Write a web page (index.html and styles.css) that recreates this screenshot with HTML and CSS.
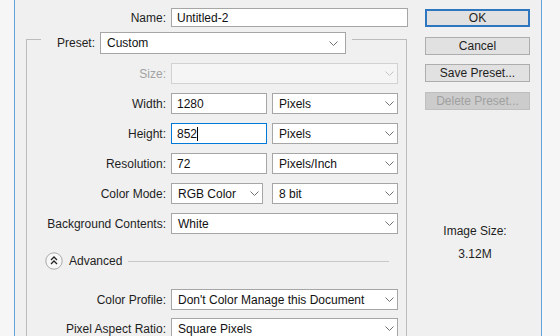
FILE: index.html
```html
<!DOCTYPE html>
<html lang="en">
<head>
  <meta charset="UTF-8" />
  <meta name="viewport" content="width=device-width, initial-scale=1.0"/>
  <title>New</title>
  <link rel="stylesheet" href="styles.css">
</head>
<body>

  <div class="screen">
    <div class="dialog">

      <div class="form">
        <div class="name-row">
          <span class="label">Name:</span>
          <div class="field">Untitled-2</div>
        </div>

        <fieldset class="group">
          <legend class="preset">
            <span class="label">Preset:</span>
            <div class="select preset-select">
              <span>Custom</span>
              <svg class="chev" width="9" height="5" viewBox="0 0 9 5"><path d="M0.5 0.5 L4.5 4.5 L8.5 0.5"/></svg>
            </div>
          </legend>

          <div class="rows">
            <span class="label disabled">Size:</span>
            <div class="select disabled">
              <span></span>
              <svg class="chev" width="9" height="5" viewBox="0 0 9 5"><path d="M0.5 0.5 L4.5 4.5 L8.5 0.5"/></svg>
            </div>

            <span class="label">Width:</span>
            <div class="pair">
              <div class="field num">1280</div>
              <div class="select">
                <span>Pixels</span>
                <svg class="chev" width="9" height="5" viewBox="0 0 9 5"><path d="M0.5 0.5 L4.5 4.5 L8.5 0.5"/></svg>
              </div>
            </div>

            <span class="label">Height:</span>
            <div class="pair">
              <div class="field num focus">852<span class="caret"></span></div>
              <div class="select">
                <span>Pixels</span>
                <svg class="chev" width="9" height="5" viewBox="0 0 9 5"><path d="M0.5 0.5 L4.5 4.5 L8.5 0.5"/></svg>
              </div>
            </div>

            <span class="label">Resolution:</span>
            <div class="pair">
              <div class="field num">72</div>
              <div class="select">
                <span>Pixels/Inch</span>
                <svg class="chev" width="9" height="5" viewBox="0 0 9 5"><path d="M0.5 0.5 L4.5 4.5 L8.5 0.5"/></svg>
              </div>
            </div>

            <span class="label">Color Mode:</span>
            <div class="pair mode">
              <div class="select mode-select">
                <span>RGB Color</span>
                <svg class="chev" width="9" height="5" viewBox="0 0 9 5"><path d="M0.5 0.5 L4.5 4.5 L8.5 0.5"/></svg>
              </div>
              <div class="select">
                <span>8 bit</span>
                <svg class="chev" width="9" height="5" viewBox="0 0 9 5"><path d="M0.5 0.5 L4.5 4.5 L8.5 0.5"/></svg>
              </div>
            </div>

            <span class="label">Background Contents:</span>
            <div class="select">
              <span>White</span>
              <svg class="chev" width="9" height="5" viewBox="0 0 9 5"><path d="M0.5 0.5 L4.5 4.5 L8.5 0.5"/></svg>
            </div>
          </div>

          <div class="advanced">
            <svg class="toggle" width="18" height="18" viewBox="0 0 18 18">
              <circle cx="9" cy="9" r="8.2" fill="#f7f7f7" stroke="#a9a9a9"/>
              <path d="M6 8 L9 5 L12 8 M6 12 L9 9 L12 12" fill="none" stroke="#222" stroke-width="1.3"/>
            </svg>
            <span>Advanced</span>
            <span class="rule"></span>
          </div>

          <div class="rows rows-advanced">
            <span class="label">Color Profile:</span>
            <div class="select">
              <span>Don't Color Manage this Document</span>
              <svg class="chev" width="9" height="5" viewBox="0 0 9 5"><path d="M0.5 0.5 L4.5 4.5 L8.5 0.5"/></svg>
            </div>

            <span class="label">Pixel Aspect Ratio:</span>
            <div class="select">
              <span>Square Pixels</span>
              <svg class="chev" width="9" height="5" viewBox="0 0 9 5"><path d="M0.5 0.5 L4.5 4.5 L8.5 0.5"/></svg>
            </div>
          </div>
        </fieldset>
      </div>

      <div class="side">
        <button class="btn default">OK</button>
        <button class="btn">Cancel</button>
        <button class="btn">Save Preset...</button>
        <button class="btn" disabled>Delete Preset...</button>

        <div class="info">
          <div>Image Size:</div>
          <div class="size">3.12M</div>
        </div>
      </div>

    </div>
  </div>

</body>
</html>
```

FILE: styles.css
```css
:root {
  --face: #f0f0f0;
  --text: #1e1e1e;
  --edge: #a6a6a6;
  --blue: #0078d7;
}

* {
  box-sizing: border-box;
}

body {
  margin: 0;
  background: #f6f6f6;
  font-family: 'Liberation Sans', Arial, sans-serif;
  font-size: 12px;
  color: var(--text);
}

.screen {
  height: 336px;
  overflow: hidden;
  display: flex;
}

.dialog {
  margin-left: 14px;
  width: 528px;
  height: 336px;
  display: flex;
  background: var(--face);
  border-left: 1px solid #62a3da;
  border-right: 1px solid #62a3da;
}

.form {
  width: 395px;
}

.label {
  text-align: right;
  white-space: nowrap;
}

.label.disabled {
  color: #a2a2a2;
}

/* name */
.name-row {
  display: grid;
  grid-template-columns: 151px 237px;
  column-gap: 5px;
  align-items: center;
  padding-top: 8px;
}

.field,
.select {
  height: 21px;
  background: #fff;
  border: 1px solid var(--edge);
  display: flex;
  align-items: center;
  white-space: nowrap;
  color: #111;
}

.field {
  padding-left: 5px;
}

.name-row .field {
  height: 19px;
}

.field.focus {
  border-color: var(--blue);
}

.caret {
  width: 1px;
  height: 14px;
  background: #000;
}

.select {
  justify-content: space-between;
  padding: 0 3px 0 6px;
}

.select.disabled {
  background: #f5f5f5;
  border-color: #d2d2d2;
}

.chev {
  flex: none;
  fill: none;
  stroke: #707070;
}

.select.disabled .chev {
  stroke: #c4c4c4;
}

/* preset group */
.group {
  margin: -3px 0 0 11px;
  width: 381px;
  min-width: 0;
  padding: 9px 0 20px;
  border: 1px solid #bcbcbc;
}

.preset {
  display: flex;
  align-items: center;
  gap: 5px;
  margin-left: 14px;
  padding: 8px 6px 0 2px;
}

.preset .label {
  width: 52px;
}

.preset-select {
  width: 246px;
  height: 22px;
  padding-right: 7px;
}

.rows {
  display: grid;
  grid-template-columns: 139px 227px;
  grid-auto-rows: 21px;
  column-gap: 5px;
  row-gap: 9px;
  align-items: center;
}

.pair {
  display: flex;
  gap: 5px;
  height: 21px;
}

.pair .field {
  width: 96px;
  flex: none;
}

.pair .select {
  flex: 1;
}

.pair.mode {
  gap: 9px;
}

.pair .mode-select {
  flex: none;
  width: 92px;
}

/* advanced */
.advanced {
  display: flex;
  align-items: center;
  gap: 6px;
  height: 18px;
  margin: 18px 17px 0 0;
  padding-left: 18px;
}

.rule {
  flex: 1;
  border-top: 1px solid #c8c8c8;
}

.rows-advanced {
  margin-top: 19px;
  row-gap: 8px;
}

/* buttons */
.side {
  width: 105px;
  margin-left: 15px;
  padding-top: 9px;
  display: flex;
  flex-direction: column;
  gap: 9.6px;
}

.btn {
  height: 18px;
  padding: 0;
  font: inherit;
  color: var(--text);
  background: #e1e1e1;
  border: 1px solid #adadad;
}

.btn.default {
  border: 2px solid #2f76c0;
}

.btn:disabled {
  background: #cccccc;
  border-color: #bfbfbf;
  color: #a0a0a0;
}

.info {
  margin-top: 105px;
  padding-right: 5px;
  text-align: center;
  line-height: 15px;
}

.info .size {
  margin-top: 8px;
}
```
